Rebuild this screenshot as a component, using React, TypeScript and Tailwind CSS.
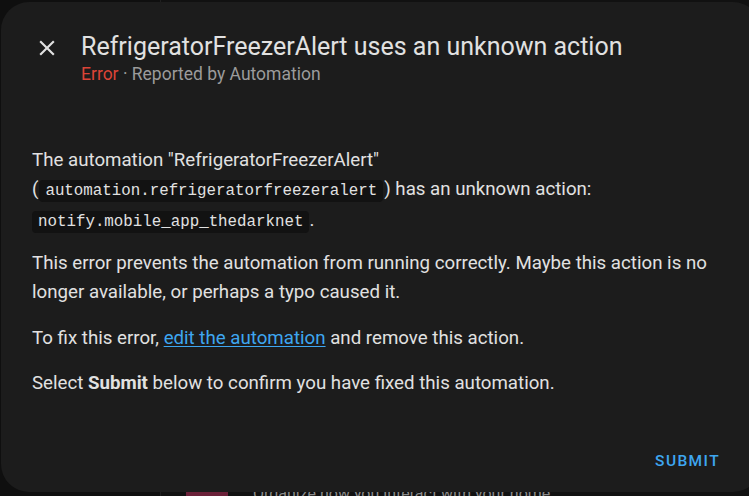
export default function App() {
  const mono = { fontFamily: '"Liberation Mono", monospace' }
  return (
    <div className="relative h-[496px] w-[749px] overflow-hidden bg-[#111111]" style={{ fontFamily: 'Roboto, "Noto Sans", sans-serif' }}>
      {/* page behind the dialog */}
      <div className="flex h-full">
        <div className="h-full w-[161px] border-r border-[#1f1f1f] bg-[#0f0f0f]" />
        <div className="flex flex-1 flex-col justify-end">
          <div className="flex items-start gap-[25px] pl-[25px]">
            <div className="h-[4px] w-[42px] bg-[#6b2139]" />
            <span className="text-[16px] leading-[4px] text-[#8a8a8a]">Organize how you interact with your home</span>
          </div>
        </div>
      </div>

      {/* dialog */}
      <div className="absolute left-[1px] top-[2px] flex h-[490px] w-[760px] flex-col rounded-[28px] bg-[#1c1c1c]">
        <div className="flex items-start pl-[33px] pt-[29px]">
          <button className="mt-[4px] flex h-[26px] w-[26px] items-center justify-center text-[#e1e1e1]">
            <svg viewBox="0 0 24 24" className="h-[26px] w-[26px]" fill="currentColor">
              <path d="M19,6.41L17.59,5L12,10.59L6.41,5L5,6.41L10.59,12L5,17.59L6.41,19L12,13.41L17.59,19L19,17.59L13.41,12L19,6.41Z" />
            </svg>
          </button>
          <div className="ml-[21px]">
            <h2 className="text-[25px] leading-[32px] text-[#e1e1e1]">RefrigeratorFreezerAlert uses an unknown action</h2>
            <p className="text-[17.5px] leading-[22px] text-[#9b9b9b]">
              <span className="text-[#db4437]">Error</span> · Reported by Automation
            </p>
          </div>
        </div>

        <div className="w-[748px] pl-[31px] pr-[20px] pt-[61px] text-[18.7px] leading-[29px] text-[#e1e1e1]">
          <p>
            The automation "RefrigeratorFreezerAlert"
            <br />(
            <code className="mx-[1px] rounded-[4px] bg-[#121212] px-[6px] py-[2px] text-[15.8px]" style={mono}>
              automation.refrigeratorfreezeralert
            </code>
            ) has an unknown action:{' '}
            <code className="rounded-[4px] bg-[#121212] px-[6px] py-[2px] text-[15.8px]" style={mono}>
              notify.mobile_app_thedarknet
            </code>
            .
          </p>
          <p className="mt-[12px]">
            This error prevents the automation from running correctly. Maybe this action is no longer available, or perhaps a typo caused it.
          </p>
          <p className="mt-[17px]">
            To fix this error,{' '}
            <a href="#" className="text-[#3ea6f0] underline underline-offset-2">
              edit the automation
            </a>{' '}
            and remove this action.
          </p>
          <p className="mt-[16px]">
            Select <b className="font-bold">Submit</b> below to confirm you have fixed this automation.
          </p>
        </div>

        <div className="mt-auto flex w-[748px] justify-end pb-[13px] pr-[23px]">
          <button className="px-[6px] py-[8px] text-[15.5px] font-medium leading-[20px] tracking-[1.4px] text-[#3ea6f0]">SUBMIT</button>
        </div>
      </div>
    </div>
  )
}
